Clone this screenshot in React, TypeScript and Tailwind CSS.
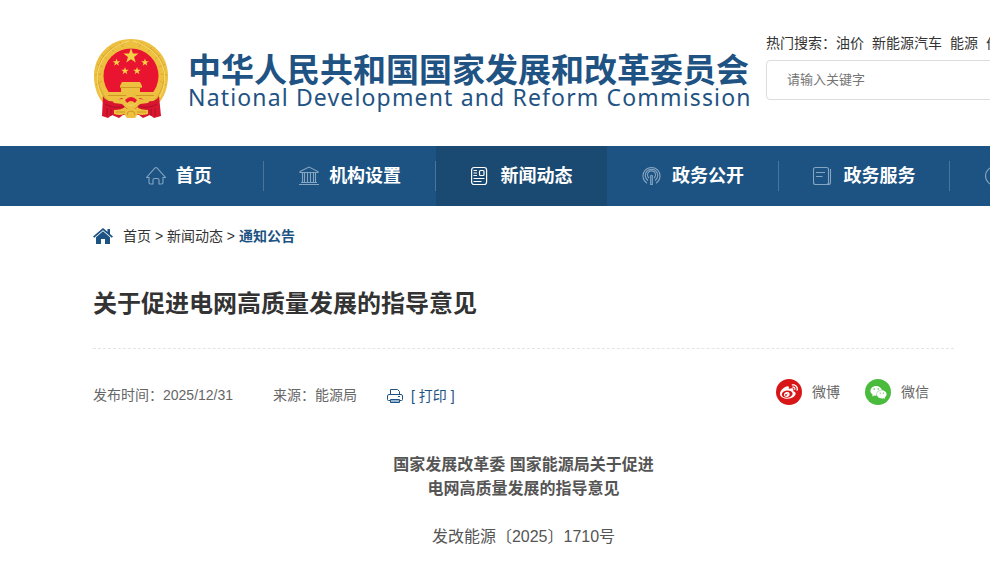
import type { ReactNode } from "react";
import { FaWeibo, FaWeixin } from "react-icons/fa";

type NavItem = {
  label: string;
  icon: ReactNode;
  active?: boolean;
};

const line = {
  width: 20,
  height: 20,
  viewBox: "0 0 20 20",
  fill: "none",
  stroke: "currentColor",
  strokeWidth: 1.1,
};

const navItems: NavItem[] = [
  {
    label: "首页",
    icon: (
      <svg {...line}>
        <path d="M.5 11.500 9 2q1-1 2 0l8.500 9.500H17v5q0 1.500-1.500 1.500H13v-4q0-1.500-1.500-1.500h-3Q7 12.500 7 14v4H4.500Q3 18 3 16.500v-5z" />
      </svg>
    ),
  },
  {
    label: "机构设置",
    icon: (
      <svg {...line}>
        <path d="M1 5.500 10 1l9 4.500v1H1zM0 18.500h20M2 16.500h16M3.500 7v9.500M5.500 7v9.500M8.500 7v9.500M11.500 7v9.500M14.500 7v9.500M16.500 7v9.500" />
      </svg>
    ),
  },
  {
    label: "新闻动态",
    active: true,
    icon: (
      <svg {...line} strokeWidth={1.2}>
        <rect x="0.6" y="1.500" width="15" height="17" rx="2.500" />
        <rect x="8.500" y="4.500" width="4.500" height="5" rx="1" />
        <path d="M2.500 4.500h3.500M2.500 7h3.500M2.500 9.500h3.500M2.500 12.500h11M2.500 15.500h8" />
      </svg>
    ),
  },
  {
    label: "政务公开",
    icon: (
      <svg {...line}>
        <path d="M5 17.200a8.500 8.500 0 1 1 9 0M6 14.500a6.200 6.200 0 1 1 7 0M7 12a4 4 0 1 1 5 0" />
        <path d="M8.700 18.500v-8.500q0-.8.8-.8t.8.8v8.500z" />
      </svg>
    ),
  },
  {
    label: "政务服务",
    icon: (
      <svg {...line}>
        <rect x="0.500" y="1.500" width="15" height="17" rx="2" />
        <path d="M3 6.500h9M3 10.500h6.500M17.500 3v13.500q0 2-2.500 2" />
      </svg>
    ),
  },
  {
    label: "发改数据",
    icon: (
      <svg {...line}>
        <circle cx="9.500" cy="10" r="9" />
        <path d="M9.500 1v9h9" />
      </svg>
    ),
  },
  {
    label: "互动交流",
    icon: (
      <svg {...line}>
        <path d="M1 3.500h18v11h-9l-4 4v-4H1z" />
      </svg>
    ),
  },
];

const hotWords = ["油价", "新能源汽车", "能源", "价格"];

function Star({ x, y, r }: { x: number; y: number; r: number }) {
  return (
    <path
      transform={`translate(${x} ${y}) scale(${r})`}
      fill="#f5cf45"
      d="M0-1 .24-.31.95-.31.38.12.59.81 0 .4-.59.81-.38.12-.95-.31-.24-.31z"
    />
  );
}

function Emblem() {
  return (
    <svg width="76" height="84" viewBox="0 0 76 84" className="shrink-0" aria-hidden="true">
      <path fill="#edc040" d="M38 2C17 2 1 18 1 39c0 12 4 22 11 29l52 0c7-7 11-17 11-29C75 18 59 2 38 2z" />
      <g fill="none">
        <path stroke="#d5a02c" strokeWidth="0.9" d="M15 64C-3 44 2 13 32 6M61 64C79 44 74 13 44 6" />
        <path
          stroke="#d5a02c"
          strokeWidth="0.8"
          d="m3 48 6-4M2 38l6-1M4 27l6 3M9 18l5 4M17 10l4 5M27 5l3 5M73 48l-6-4M74 38l-6-1M72 27l-6 3M67 18l-5 4M59 10l-4 5M49 5l-3 5"
        />
        <path stroke="#f8dc70" strokeWidth="1" d="M9 60C-2 38 6 13 36 4M67 60C78 38 70 13 40 4" />
      </g>
      <circle cx="38" cy="39" r="27.500" fill="#e81430" />
      <Star x={38} y={19} r={8} />
      <Star x={23.500} y={25.500} r={4} />
      <Star x={52} y={25.500} r={4} />
      <Star x={32} y={34} r={4} />
      <Star x={44} y={34} r={4} />
      <path fill="#edc040" d="M29 45h18l2 4v2h-2v4h17v3l-4 5H16l-4-5v-3h16v-4h-1v-2z" />
      <path stroke="#c98d20" strokeWidth="0.8" d="M27 50.500h22M15 58.500h46" />
      <path fill="#d81630" d="M10 59c2 4 6 6 11 5l8-3h18l8 3c5 1 9-1 11-5l2 20-7 2-4-3-7 3-4-3H30l-4 3-7-3-4 3-6-2z" />
      <path fill="#edc040" d="M16 60q8 3 13 2 9-10 18 0 5 1 13-2l-5 6-8 1q-9 11-18 0l-8-1z" />
      <path fill="#e81430" d="M32 63q6-6 12 0l-2 3q-4-4-8 0z" />
      <path fill="none" stroke="#f4d468" strokeWidth="0.9" d="M33 66q5 5 10 0" />
      <path fill="none" stroke="#a90d22" strokeWidth="0.9" d="M12 67c7 4 12 4 19 2M64 67c-7 4-12 4-19 2M14 71v8M18 72v7M62 71v8M58 72v7" />
      <path fill="#edc040" d="M21 73q8 0 11-3l2 2 2-3h4l2 3 2-2q3 3 11 3v4q-7 2-10 0l-3 4h-8l-3-4q-3 2-10 0z" />
      <path fill="none" stroke="#c98d20" strokeWidth="0.8" d="M34 78a4 4 0 0 1 8 0M23 75h9M44 75h9" />
    </svg>
  );
}

function Header() {
  return (
    <header className="flex h-[146px] w-[1200px] items-start">
      <div className="flex items-start pt-[37px]">
        <Emblem />
        <div className="ml-[19px] w-[578px] pt-4 text-[#1f5383]">
          <h1 className="whitespace-nowrap text-[33px] leading-9 font-bold">
            中华人民共和国国家发展和改革委员会
          </h1>
          <p className="-mt-1 whitespace-nowrap font-['Noto_Sans'] text-[23px] leading-6 tracking-wider">
            National Development and Reform Commission
          </p>
        </div>
      </div>
      <div className="flex-1 pt-8">
        <div className="flex gap-2 whitespace-nowrap leading-[22px]">
          <span className="-mr-2">热门搜索：</span>
          {hotWords.map((word) => (
            <a key={word} href="#">
              {word}
            </a>
          ))}
        </div>
        <input
          type="text"
          aria-label="请输入关键字"
          placeholder="请输入关键字"
          className="mt-1.5 h-10 w-full rounded border border-[#ddd] pb-0.5 pl-5 text-[13px] placeholder:text-[#757575]"
        />
      </div>
    </header>
  );
}

function Nav() {
  return (
    <nav className="bg-[#1d5382] pl-[93px]">
      <ul className="flex w-[1200px]">
        {navItems.map((item) => (
          <li key={item.label} className="flex-1">
            <a
              href="#"
              className={`relative flex h-[60px] items-center justify-center gap-2.5 text-lg font-bold text-white ${
                item.active ? "bg-[#1a4971]" : ""
              }`}
            >
              <span className={item.active ? "text-white" : "text-[#86a5c1]"}>{item.icon}</span>
              {item.label}
              {!item.active && <i className="absolute top-[15px] right-0 h-[30px] w-px bg-[#4a759b]" />}
            </a>
          </li>
        ))}
      </ul>
    </nav>
  );
}

function Breadcrumb() {
  return (
    <div className="flex h-[60px] items-center">
      <svg width="20" height="18" viewBox="0 0 20 18" fill="#1d5382" aria-hidden="true">
        <path d="M10 1 0 9.500l1.200 1.300L10 3.300l8.800 7.500L20 9.500l-3-2.600V2h-2.500v2.800z" />
        <path d="M10 4.300 3 10.300V17h5v-5h4v5h5v-6.700z" />
      </svg>
      <p className="ml-2.5">
        <a href="#">首页</a> &gt; <a href="#">新闻动态</a> &gt;{" "}
        <a href="#" className="font-bold text-[#1d5382]">
          通知公告
        </a>
      </p>
    </div>
  );
}

function PrintIcon() {
  return (
    <svg width="16" height="16" viewBox="0 0 16 16" fill="none" stroke="#1d5382" aria-hidden="true">
      <path d="M3.500 6.500v-5h7l2 2v3M3 12.500H1.500q-1 0-1-1V8q0-1.500 1.500-1.500h12q1.500 0 1.500 1.500v3.500q0 1-1 1H13M11 8.500h2" />
      <path fill="#9cb6cd" d="M3.500 11.500h9v3h-9z" />
    </svg>
  );
}

function Article() {
  return (
    <main className="w-[861px] text-[#666]">
      <h2 className="border-b border-dashed border-[#e5e5e5] pt-5 pb-[26px] text-2xl leading-9 font-bold text-[#333]">
        关于促进电网高质量发展的指导意见
      </h2>
      <div className="flex justify-between pt-[30px]">
        <div className="flex items-start pt-[5px] leading-[22px]">
          <span>发布时间：2025/12/31</span>
          <span className="ml-10">来源：能源局</span>
          <button type="button" className="ml-[30px] flex items-center gap-2 pt-px text-[#1d5382]">
            <PrintIcon />[ 打印 ]
          </button>
        </div>
        <div className="flex h-[26px] items-center gap-[25px] pr-[25px]">
          <a href="#" className="flex items-center gap-2.5">
            <span className="flex size-[26px] items-center justify-center rounded-full bg-[#d81618] text-white">
              <FaWeibo size={18} />
            </span>
            微博
          </a>
          <a href="#" className="flex items-center gap-2.5">
            <span className="flex size-[26px] items-center justify-center rounded-full bg-[#4abb3d] text-white">
              <FaWeixin size={17} />
            </span>
            微信
          </a>
        </div>
      </div>
      <div className="pt-[46px] text-center text-base leading-6 text-[#555]">
        <p className="font-bold">
          国家发展改革委 国家能源局关于促进
          <br />
          电网高质量发展的指导意见
        </p>
        <p className="pt-6">发改能源〔2025〕1710号</p>
      </div>
    </main>
  );
}

export default function App() {
  return (
    <div className="min-h-screen overflow-hidden bg-white font-['Liberation_Sans','Noto_Sans_CJK_SC',sans-serif] text-sm text-[#333]">
      <div className="pl-[93px]">
        <Header />
      </div>
      <Nav />
      <div className="pl-[93px]">
        <Breadcrumb />
        <Article />
      </div>
    </div>
  );
}
